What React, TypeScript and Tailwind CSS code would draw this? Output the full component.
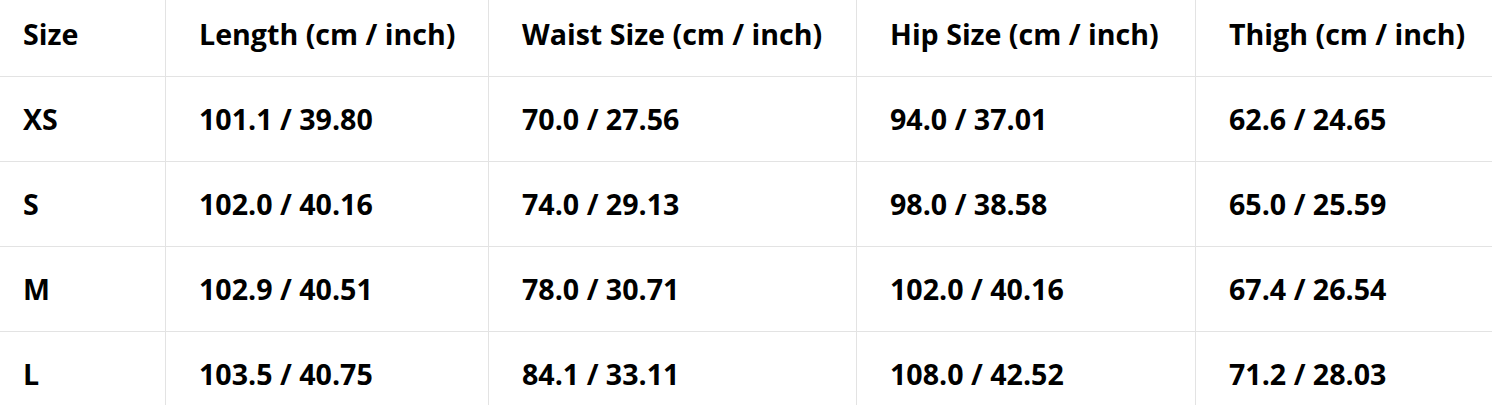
const headers = ['Size', 'Length (cm / inch)', 'Waist Size (cm / inch)', 'Hip Size (cm / inch)', 'Thigh (cm / inch)']

const rows = [
  ['XS', '101.1 / 39.80', '70.0 / 27.56', '94.0 / 37.01', '62.6 / 24.65'],
  ['S', '102.0 / 40.16', '74.0 / 29.13', '98.0 / 38.58', '65.0 / 25.59'],
  ['M', '102.9 / 40.51', '78.0 / 30.71', '102.0 / 40.16', '67.4 / 26.54'],
  ['L', '103.5 / 40.75', '84.1 / 33.11', '108.0 / 42.52', '71.2 / 28.03'],
]

export default function App() {
  return (
    <div className="w-[1492px] h-[405px] overflow-hidden bg-white">
      <div
        className="-mt-[8px] -ml-[10px] grid grid-cols-[176px_323px_368px_339px_320px] text-[28.6px] font-bold text-black"
        style={{ fontFamily: '"Open Sans", "Noto Sans", sans-serif' }}
      >
        {[headers, ...rows].map((row, i) =>
          row.map((cell, j) => (
            <div
              key={`${i}-${j}`}
              className="h-[85px] flex items-center px-[33px] border-b border-r border-[#e3e3e3] whitespace-nowrap"
            >
              {cell}
            </div>
          ))
        )}
      </div>
    </div>
  )
}
